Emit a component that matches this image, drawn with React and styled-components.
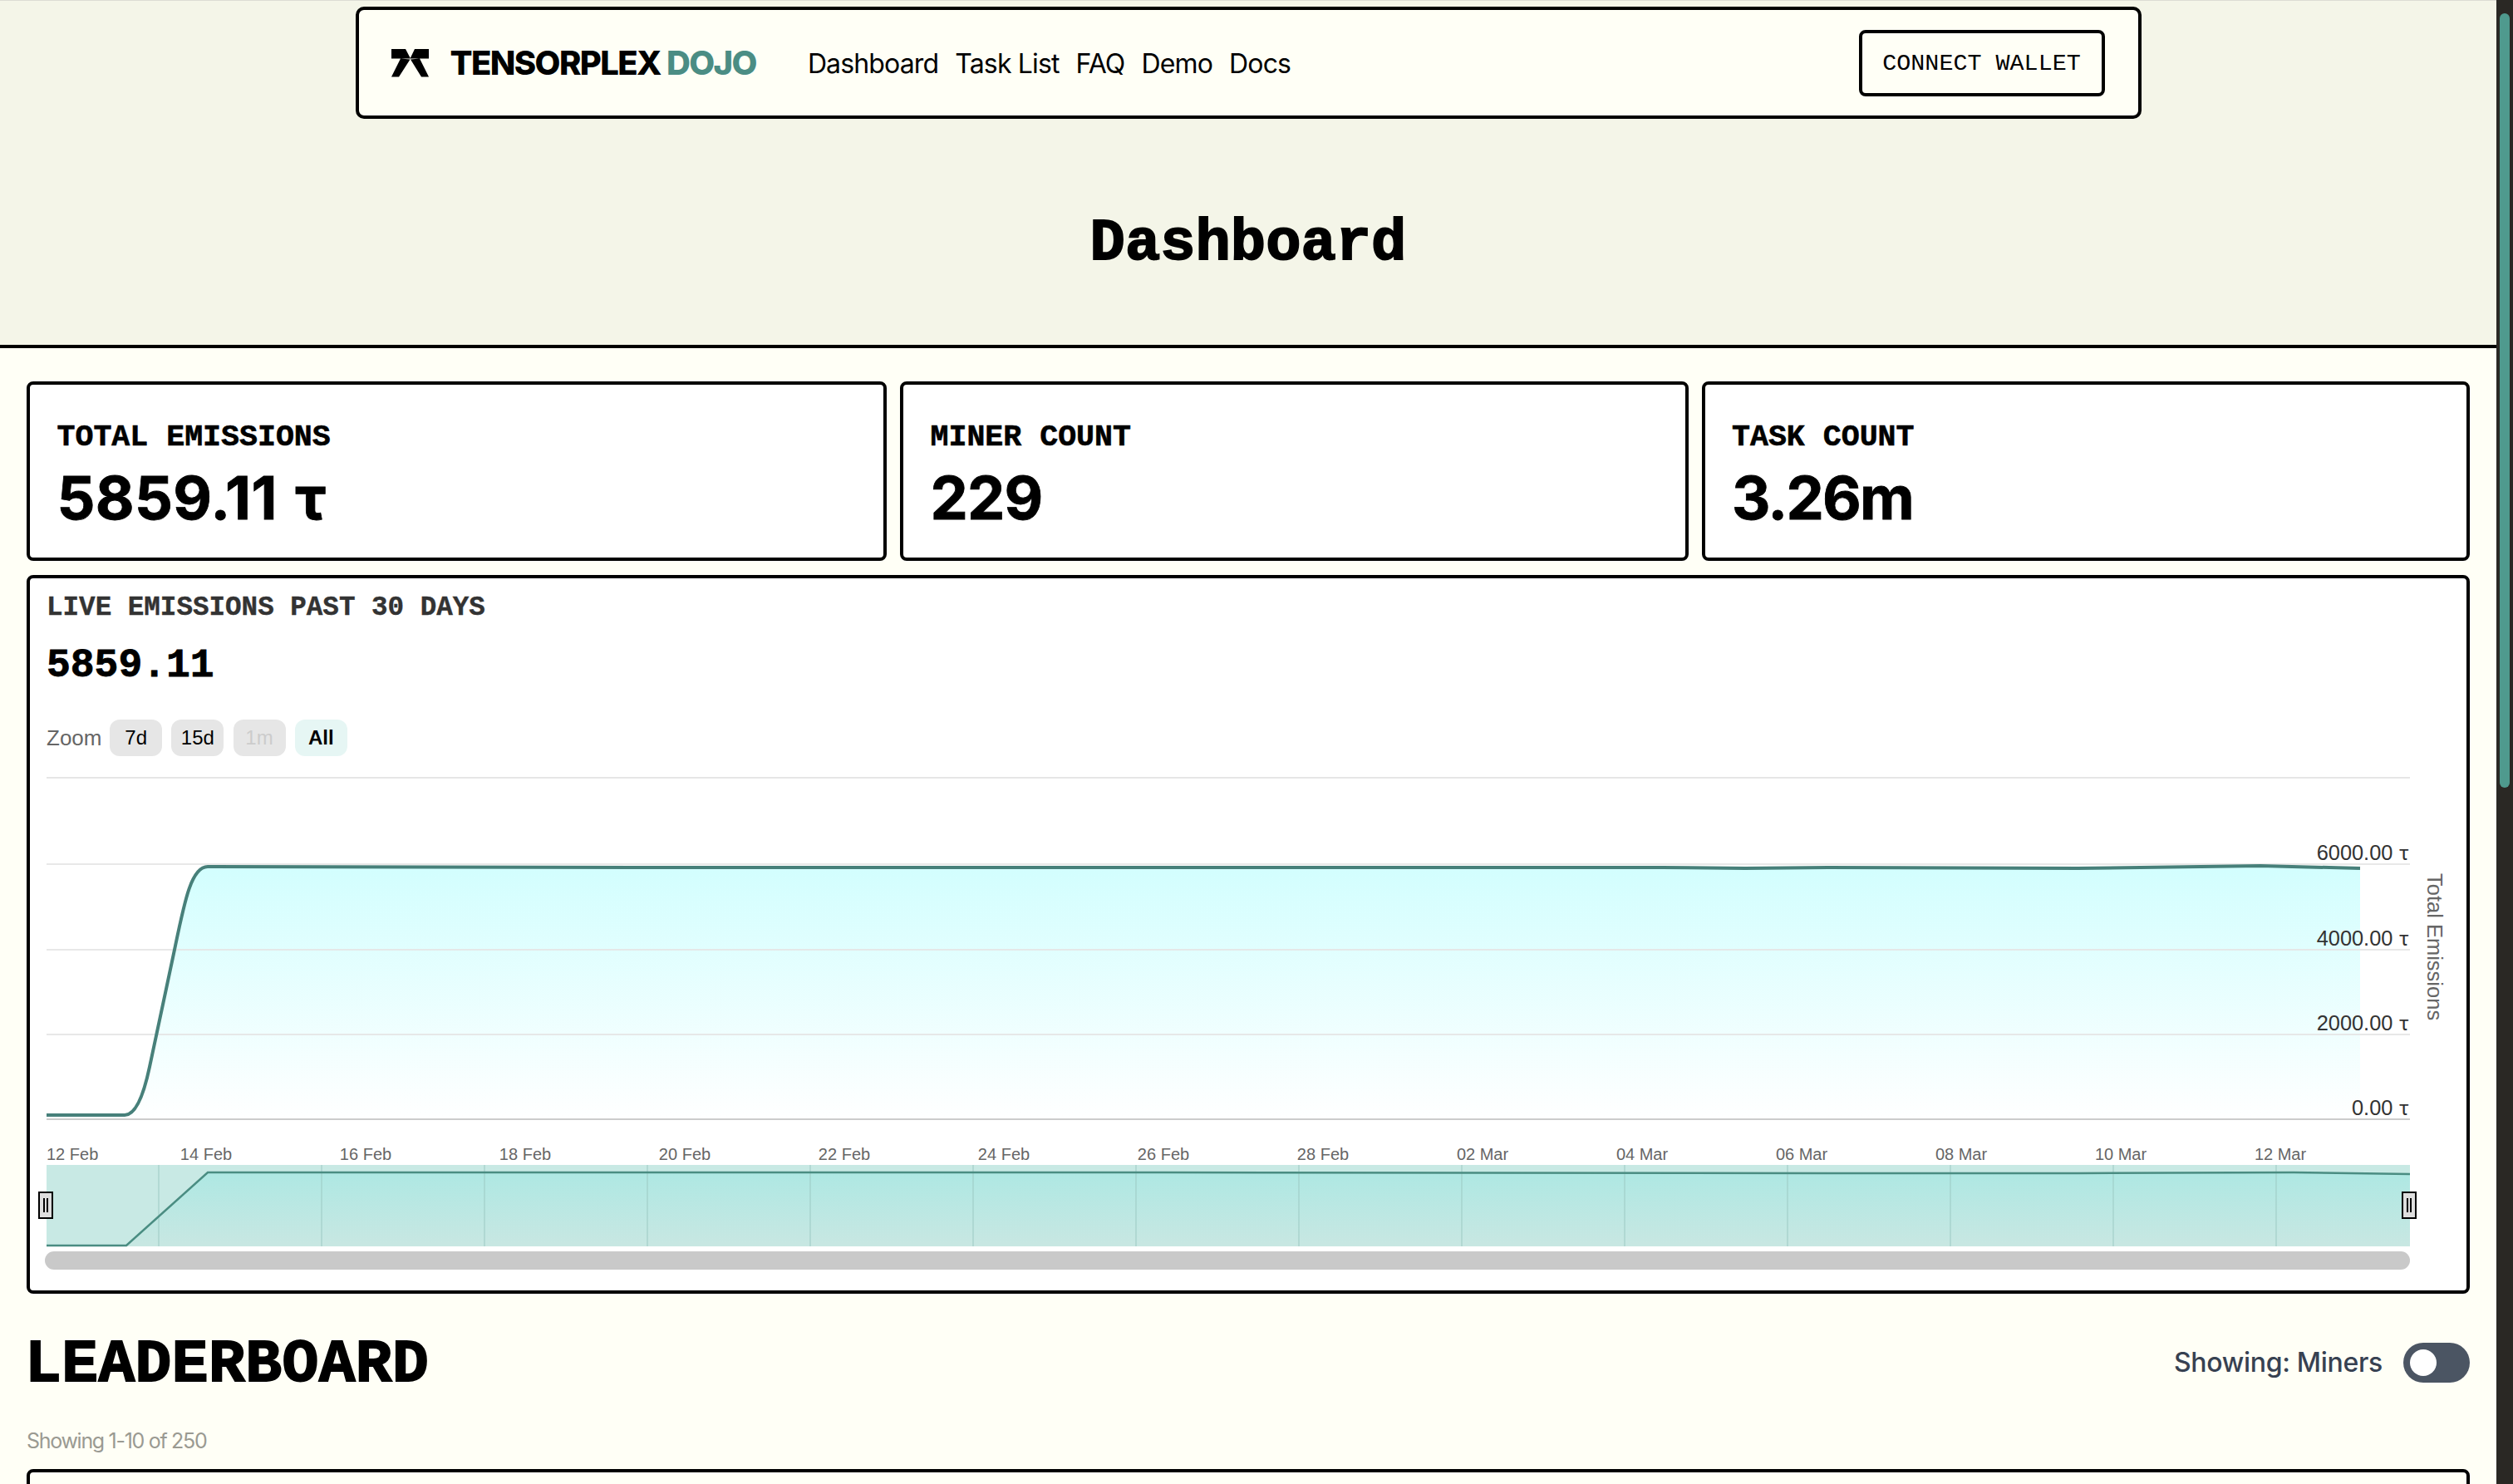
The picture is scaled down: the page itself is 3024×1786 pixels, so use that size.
import React from "react";
import styled, { createGlobalStyle } from "styled-components";

const Global = createGlobalStyle`
  html, body { margin: 0; padding: 0; background: #fffff6; overflow: hidden; }
  * { box-sizing: border-box; }
`;

const mono = `"Liberation Mono", "DejaVu Sans Mono", monospace`;
const inter = `Inter, "Noto Sans", sans-serif`;
const arial = `"Liberation Sans", Arial, sans-serif`;

const Shell = styled.div`
  display: flex;
  height: 100vh;
  overflow: hidden;
`;
const Main = styled.main`
  flex: 1;
  min-width: 0;
  background: #fffff6;
  overflow: hidden;
`;
const Scrollbar = styled.div`
  width: 20px;
  flex: none;
  background: #2a2824;
  padding: 16px 4px 0;
`;
const Thumb = styled.div`
  height: 932px;
  border-radius: 6px;
  background: #4f9a8e;
`;

const Hero = styled.header`
  height: 419px;
  background: #f4f5e8;
  border-top: 1px solid #dcdcd4;
  border-bottom: 4px solid #000;
  padding-top: 7px;
`;
const Nav = styled.nav`
  width: 2149px;
  height: 135px;
  margin: 0 auto;
  display: flex;
  align-items: center;
  padding: 0 40px 0 39px;
  background: #fffff6;
  border: 4px solid #000;
  border-radius: 10px;
`;
const Logo = styled.svg`
  width: 45px;
  height: 34px;
  flex: none;
`;
const Brand = styled.div`
  margin-left: 26px;
  display: flex;
  gap: 7px;
  font: 800 40px/1 ${inter};
  letter-spacing: -1.6px;
  color: #000;
`;
const BrandAccent = styled.span`
  color: #4b8d84;
`;
const Links = styled.div`
  margin-left: 62px;
  padding-top: 3px;
  display: flex;
  gap: 20px;
`;
const NavLink = styled.a`
  font: 400 32px/1 ${inter};
  letter-spacing: -0.85px;
  color: #000;
`;
const Wallet = styled.button`
  margin-left: auto;
  width: 296px;
  height: 80px;
  background: #fffff6;
  border: 4px solid #000;
  border-radius: 8px;
  font: 400 28.4px/1 ${mono};
  color: #000;
  padding: 4px 0 0;
`;
const PageTitle = styled.h1`
  margin: 110px 0 0;
  text-align: center;
  font: 700 70.5px/80px ${mono};
  -webkit-text-stroke: 1.8px #000;
  color: #000;
`;

const Content = styled.div`
  padding: 40px 32px 0;
`;
const Stats = styled.section`
  display: grid;
  grid-template-columns: 1035fr 948.5fr 924.5fr;
  gap: 16px;
`;
const Card = styled.div`
  background: #fff;
  border: 4px solid #000;
  border-radius: 8px;
`;
const StatCard = styled(Card)`
  height: 216px;
  padding: 44px 32px 0 32.5px;
`;
const StatLabel = styled.div`
  font: 700 36.6px/40px ${mono};
  -webkit-text-stroke: 0.6px #000;
  color: #000;
`;
const StatValue = styled.div`
  margin-top: 12px;
  font: 700 72px/80px ${inter};
  letter-spacing: ${(p) => p.$tracking}px;
  word-spacing: 4px;
  -webkit-text-stroke: 0.8px #000;
  color: #000;
`;
const ChartCard = styled(Card)`
  margin-top: 17px;
  padding: 16px 0 13px 0;
`;
const ChartTitle = styled.div`
  padding-left: 20px;
  font: 700 32.6px/40px ${mono};
  -webkit-text-stroke: 0.4px #333;
  color: #333;
`;
const ChartValue = styled.div`
  margin-top: 21px;
  padding-left: 20px;
  font: 700 48px/56px ${mono};
  -webkit-text-stroke: 0.8px #000;
  color: #000;
`;
const ZoomRow = styled.div`
  margin-top: 37px;
  padding-left: 20px;
  display: flex;
  align-items: center;
  gap: 11.2px;
`;
const ZoomLabel = styled.span`
  font: 400 26px/44px ${arial};
  color: #666;
  margin-right: -1.5px;
`;
const RangeButton = styled.button`
  width: 63px;
  height: 44px;
  padding: 0;
  border: 0;
  border-radius: 12px;
  background: ${(p) => (p.$active ? "#e6f6f4" : "#e6e6e6")};
  color: ${(p) => (p.$disabled ? "#cccccc" : "#000")};
  font: ${(p) => (p.$active ? 700 : 400)} 24px/1 ${arial};
`;
const Plot = styled.svg`
  display: block;
  margin-top: 15px;
  width: 2932px;
  height: 615px;
`;
const DateText = styled.text`
  font: 400 20px ${arial};
  fill: #666;
`;
const ValueText = styled.text`
  font: 400 25.4px ${arial};
  fill: #333;
`;
const TauMark = styled.tspan`
  font-family: Roboto, ${arial};
  font-size: 24px;
`;
const AxisTitle = styled.text`
  font: 400 25.5px ${arial};
  fill: #666;
`;

const LeaderHead = styled.div`
  margin-top: 47px;
  height: 72px;
  display: flex;
  align-items: center;
  justify-content: space-between;
`;
const LeaderTitle = styled.h2`
  margin: 6px 0 0 -2px;
  font: 700 73px/72px ${mono};
  letter-spacing: 0.4px;
  -webkit-text-stroke: 1.8px #000;
  color: #000;
`;
const ToggleWrap = styled.div`
  display: flex;
  align-items: center;
  gap: 25px;
`;
const ToggleLabel = styled.span`
  font: 500 32px/48px ${inter};
  letter-spacing: -0.3px;
  color: #374151;
`;
const Toggle = styled.div`
  width: 80px;
  height: 48px;
  padding: 8px;
  border-radius: 24px;
  background: #4b5563;
`;
const Knob = styled.div`
  width: 32px;
  height: 32px;
  border-radius: 50%;
  background: #fff;
`;
const Showing = styled.div`
  margin-top: 41px;
  font: 400 25px/34px ${inter};
  letter-spacing: -1.3px;
  color: #9a9a92;
`;
const TablePanel = styled.div`
  margin-top: 17px;
  height: 400px;
  border: 4px solid #000;
  border-radius: 8px;
  background: #fffff6;
`;

const dates = ["14 Feb","16 Feb","18 Feb","20 Feb","22 Feb","24 Feb","26 Feb","28 Feb","02 Mar","04 Mar","06 Mar","08 Mar","10 Mar","12 Mar"];
const levels = [["6000.00", 1040], ["4000.00", 1143], ["2000.00", 1245], ["0.00", 1347]];
const linePath = "M56 1342 L150 1342 C162 1342 172 1322 180 1284 C192 1228 200 1190 210 1143 C222 1085 230 1043 250 1043 L800 1044 L1200 1044 L2000 1044 L2100 1045 L2200 1044 L2500 1045 L2720 1042 L2840 1045";
const navLine = "M56 1499 L152 1499 L250 1411 L1400 1411 L2200 1412 L2500 1412 L2760 1411 L2900 1413";

function Chart() {
  return (
    <Plot viewBox="36 925 2932 615">
      <defs>
        <linearGradient id="areaFill" x1="0" y1="0" x2="0" y2="1">
          <stop offset="0" stopColor="#d2fefe" />
          <stop offset="1" stopColor="#ffffff" />
        </linearGradient>
        <linearGradient id="navFill" x1="0" y1="0" x2="0" y2="1">
          <stop offset="0" stopColor="#aee8e3" />
          <stop offset="1" stopColor="#c8e7e2" />
        </linearGradient>
      </defs>

      <line x1="56" x2="2900" y1="936" y2="936" stroke="#e6e6e6" strokeWidth="2" />
      <path d={`${linePath} L2840 1347 L56 1347 Z`} fill="url(#areaFill)" />
      {levels.slice(0, 3).map(([, y]) => (
        <line key={y} x1="56" x2="2900" y1={y} y2={y} stroke="#e6e6e6" strokeWidth="2" opacity="0.9" />
      ))}
      <line x1="56" x2="2900" y1="1347" y2="1347" stroke="#ccc" strokeWidth="2" />
      <path d={linePath} fill="none" stroke="#47807a" strokeWidth="4" />

      {levels.map(([label, y]) => (
        <ValueText key={label} x="2899" y={y - 5} textAnchor="end">{label} <TauMark>τ</TauMark></ValueText>
      ))}
      <AxisTitle transform="translate(2921 1051) rotate(90)">Total Emissions</AxisTitle>

      <DateText x="56" y="1396">12 Feb</DateText>
      {dates.map((d, i) => (
        <DateText key={d} x={248 + 192 * i} y="1396" textAnchor="middle">{d}</DateText>
      ))}

      <rect x="56" y="1402" width="2844" height="98" fill="#c8e9e4" />
      <path d={`${navLine} L2900 1500 L56 1500 Z`} fill="url(#navFill)" />
      {dates.map((d, i) => (
        <line key={d} x1={191 + 196 * i} x2={191 + 196 * i} y1="1402" y2="1500" stroke="#9cc9c3" strokeWidth="1" />
      ))}
      <path d={navLine} fill="none" stroke="#4a8d82" strokeWidth="2.5" />

      <rect x="54" y="1506" width="2846" height="22" rx="11" fill="#c9c9c9" />

      {[55, 2899].map((x) => (
        <g key={x}>
          <rect x={x - 8} y="1435" width="16" height="31" fill="#dedede" stroke="#000" strokeWidth="2" />
          <line x1={x - 2} x2={x - 2} y1="1442" y2="1459" stroke="#000" strokeWidth="2" />
          <line x1={x + 2} x2={x + 2} y1="1442" y2="1459" stroke="#000" strokeWidth="2" />
        </g>
      ))}
    </Plot>
  );
}

export default function App() {
  return (
    <Shell>
      <Global />
      <Main>
        <Hero>
          <Nav>
            <Logo viewBox="0 0 45 34">
              <path d="M0 0H17L23 11.5H0Z M45 0H28L22.5 11.5H45Z M11 11.5L22.5 12.5L9 33.5H0Z M34 11.5L23 12.5L36 33.5H45Z" fill="#000" />
            </Logo>
            <Brand>
              <span>TENSORPLEX</span>
              <BrandAccent>DOJO</BrandAccent>
            </Brand>
            <Links>
              <NavLink>Dashboard</NavLink>
              <NavLink>Task List</NavLink>
              <NavLink>FAQ</NavLink>
              <NavLink>Demo</NavLink>
              <NavLink>Docs</NavLink>
            </Links>
            <Wallet>CONNECT WALLET</Wallet>
          </Nav>
          <PageTitle>Dashboard</PageTitle>
        </Hero>
        <Content>
          <Stats>
            <StatCard>
              <StatLabel>TOTAL EMISSIONS</StatLabel>
              <StatValue $tracking={0.3}>5859.11 τ</StatValue>
            </StatCard>
            <StatCard>
              <StatLabel>MINER COUNT</StatLabel>
              <StatValue $tracking={-0.8}>229</StatValue>
            </StatCard>
            <StatCard>
              <StatLabel>TASK COUNT</StatLabel>
              <StatValue $tracking={-1.8}>3.26m</StatValue>
            </StatCard>
          </Stats>
          <ChartCard>
            <ChartTitle>LIVE EMISSIONS PAST 30 DAYS</ChartTitle>
            <ChartValue>5859.11</ChartValue>
            <ZoomRow>
              <ZoomLabel>Zoom</ZoomLabel>
              <RangeButton>7d</RangeButton>
              <RangeButton>15d</RangeButton>
              <RangeButton $disabled>1m</RangeButton>
              <RangeButton $active>All</RangeButton>
            </ZoomRow>
            <Chart />
          </ChartCard>
          <LeaderHead>
            <LeaderTitle>LEADERBOARD</LeaderTitle>
            <ToggleWrap>
              <ToggleLabel>Showing: Miners</ToggleLabel>
              <Toggle><Knob /></Toggle>
            </ToggleWrap>
          </LeaderHead>
          <Showing>Showing 1-10 of 250</Showing>
          <TablePanel />
        </Content>
      </Main>
      <Scrollbar><Thumb /></Scrollbar>
    </Shell>
  );
}
